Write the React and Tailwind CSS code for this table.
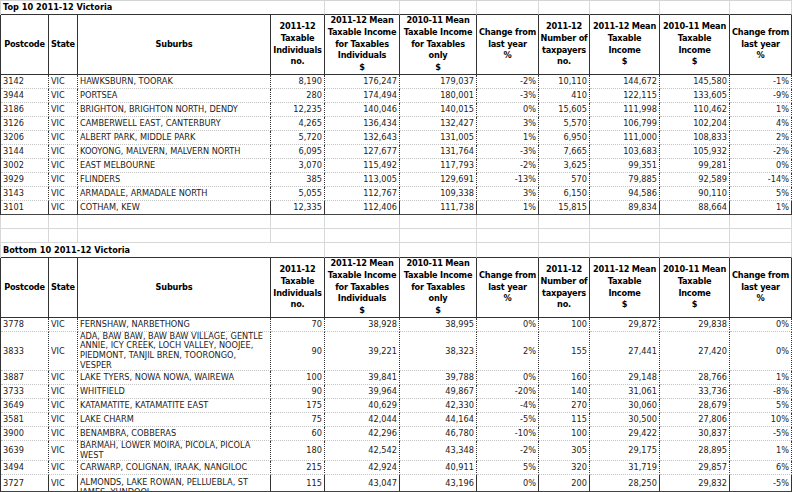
import React from "react";

const COLS =
  "grid grid-cols-[48px_29px_193px_54px_75px_77px_62px_51px_70px_70px_62px]";

const headers = [
  ["Postcode"],
  ["State"],
  ["Suburbs"],
  ["2011-12", "Taxable", "Individuals", "no."],
  ["2011-12 Mean", "Taxable Income", "for Taxables", "Individuals", "$"],
  ["2010-11 Mean", "Taxable Income", "for Taxables", "only", "$"],
  ["Change from", "last year", "%"],
  ["2011-12", "Number of", "taxpayers", "no."],
  ["2011-12 Mean", "Taxable", "Income", "$"],
  ["2010-11 Mean", "Taxable", "Income", "$"],
  ["Change from", "last year", "%"],
];

const top10 = [
  ["3142", ["HAWKSBURN, TOORAK"], "8,190", "176,247", "179,037", "-2%", "10,110", "144,672", "145,580", "-1%"],
  ["3944", ["PORTSEA"], "280", "174,494", "180,001", "-3%", "410", "122,115", "133,605", "-9%"],
  ["3186", ["BRIGHTON, BRIGHTON NORTH, DENDY"], "12,235", "140,046", "140,015", "0%", "15,605", "111,998", "110,462", "1%"],
  ["3126", ["CAMBERWELL EAST, CANTERBURY"], "4,265", "136,434", "132,427", "3%", "5,570", "106,799", "102,204", "4%"],
  ["3206", ["ALBERT PARK, MIDDLE PARK"], "5,720", "132,643", "131,005", "1%", "6,950", "111,000", "108,833", "2%"],
  ["3144", ["KOOYONG, MALVERN, MALVERN NORTH"], "6,095", "127,677", "131,764", "-3%", "7,665", "103,683", "105,932", "-2%"],
  ["3002", ["EAST MELBOURNE"], "3,070", "115,492", "117,793", "-2%", "3,625", "99,351", "99,281", "0%"],
  ["3929", ["FLINDERS"], "385", "113,005", "129,691", "-13%", "570", "79,885", "92,589", "-14%"],
  ["3143", ["ARMADALE, ARMADALE NORTH"], "5,055", "112,767", "109,338", "3%", "6,150", "94,586", "90,110", "5%"],
  ["3101", ["COTHAM, KEW"], "12,335", "112,406", "111,738", "1%", "15,815", "89,834", "88,664", "1%"],
];

const bottom10 = [
  ["3778", ["FERNSHAW, NARBETHONG"], "70", "38,928", "38,995", "0%", "100", "29,872", "29,838", "0%"],
  ["3833", ["ADA, BAW BAW, BAW BAW VILLAGE, GENTLE", "ANNIE, ICY CREEK, LOCH VALLEY, NOOJEE,", "PIEDMONT, TANJIL BREN, TOORONGO,", "VESPER"], "90", "39,221", "38,323", "2%", "155", "27,441", "27,420", "0%", "h-[39px]"],
  ["3887", ["LAKE TYERS, NOWA NOWA, WAIREWA"], "100", "39,841", "39,788", "0%", "160", "29,148", "28,766", "1%"],
  ["3733", ["WHITFIELD"], "90", "39,964", "49,867", "-20%", "140", "31,061", "33,736", "-8%"],
  ["3649", ["KATAMATITE, KATAMATITE EAST"], "175", "40,629", "42,330", "-4%", "270", "30,060", "28,679", "5%"],
  ["3581", ["LAKE CHARM"], "75", "42,044", "44,164", "-5%", "115", "30,500", "27,806", "10%"],
  ["3900", ["BENAMBRA, COBBERAS"], "60", "42,296", "46,780", "-10%", "100", "29,422", "30,837", "-5%"],
  ["3639", ["BARMAH, LOWER MOIRA, PICOLA, PICOLA", "WEST"], "180", "42,542", "43,348", "-2%", "305", "29,175", "28,895", "1%", "h-[20px]"],
  ["3494", ["CARWARP, COLIGNAN, IRAAK, NANGILOC"], "215", "42,924", "40,911", "5%", "320", "31,719", "29,857", "6%"],
  ["3727", ["ALMONDS, LAKE ROWAN, PELLUEBLA, ST", "JAMES, YUNDOOL"], "115", "43,047", "43,196", "0%", "200", "28,250", "29,832", "-5%", "h-[17px]", true],
];

function TitleRow({ title, first }) {
  return (
    <div
      className={`${COLS} h-[15px] border-l border-[#d4d4d4] ${
        first ? "border-t" : ""
      }`}
    >
      <div className="col-span-3 flex items-center pl-[2px] border-b border-[#333] font-bold text-black whitespace-nowrap">
        {title}
      </div>
      {Array.from({ length: 8 }).map((_, i) => (
        <div key={i} className="border-r border-[#d8d8d8] border-b border-b-[#333]"></div>
      ))}
    </div>
  );
}

function EmptyRow() {
  return (
    <div className={`${COLS} h-[14px] border-l border-[#d8d8d8]`}>
      {Array.from({ length: 11 }).map((_, i) => (
        <div key={i} className="border-r border-b border-[#d8d8d8]"></div>
      ))}
    </div>
  );
}

function HeaderRow() {
  return (
    <div className={`${COLS} h-[60px] border-l border-[#333]`}>
      {headers.map((lines, i) => (
        <div
          key={i}
          className="flex flex-col items-center justify-center border-r border-b border-[#333] font-bold text-black leading-[11.8px] tracking-[-0.2px] whitespace-nowrap"
        >
          {lines.map((l, j) => (
            <span key={j}>{l}</span>
          ))}
        </div>
      ))}
    </div>
  );
}

function DataRow({ row, last }) {
  const [pc, suburbs, ...rest] = row;
  const nums = rest.slice(0, 8);
  const h = rest[8] || "h-[14px]";
  const shift = rest[9];
  const line = last
    ? "border-b border-b-[#444]"
    : "border-b border-dotted border-b-[#c4c4c4]";
  return (
    <div className={`${COLS} ${h} border-l border-[#333]`}>
      <div className={`flex items-center pl-[2px] border-r border-r-[#333] ${line}`}>
        {pc}
      </div>
      <div className={`flex items-center pl-[2px] border-r border-r-[#333] ${line}`}>
        VIC
      </div>
      <div
        className={`flex items-center pl-[2px] overflow-hidden border-r border-r-[#333] ${line}`}
      >
        <div className={`flex flex-col leading-[9.6px] whitespace-nowrap ${shift ? "mt-[9px]" : ""}`}>
          {suburbs.map((s, j) => (
            <span key={j}>{s}</span>
          ))}
        </div>
      </div>
      {nums.map((n, i) => (
        <div
          key={i}
          className={`flex items-center justify-end pr-[2px] border-r border-r-[#333] ${line}`}
        >
          {n}
        </div>
      ))}
    </div>
  );
}

export default function App() {
  return (
    <div className="w-[792px] h-[492px] overflow-hidden bg-white font-['DejaVu_Sans',sans-serif] text-[8.2px] text-[#222]">
      <TitleRow title="Top 10 2011-12 Victoria" first />
      <HeaderRow />
      {top10.map((r, i) => (
        <DataRow key={i} row={r} last={i === top10.length - 1} />
      ))}
      <EmptyRow />
      <EmptyRow />
      <TitleRow title="Bottom 10 2011-12 Victoria" />
      <HeaderRow />
      {bottom10.map((r, i) => (
        <DataRow key={i} row={r} last={i === bottom10.length - 1} />
      ))}
    </div>
  );
}
